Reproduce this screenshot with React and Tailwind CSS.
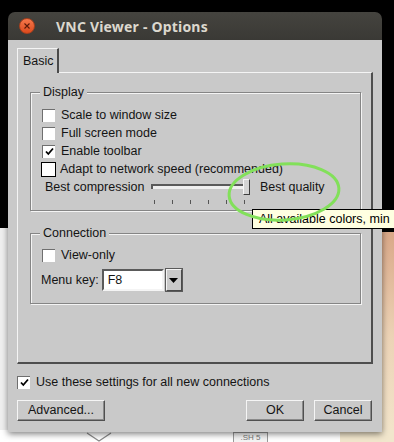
import React from "react";

const font = { fontFamily: '"Liberation Sans", Arial, sans-serif' };

function Check({ checked, focus }) {
  return (
    <div
      className={
        focus
          ? "w-[15px] h-[15px] border border-black bg-white flex items-center justify-center"
          : "w-[13px] h-[13px] bg-white border-t border-l border-[#6f6f6f] border-r-[#ececec] border-b-[#ececec] flex items-center justify-center"
      }
    >
      {checked && (
        <svg width="9" height="9" viewBox="0 0 9 9">
          <path d="M1 4.5 L3.3 7 L8 1.5" stroke="#000" strokeWidth="1.8" fill="none" />
        </svg>
      )}
    </div>
  );
}

function CheckRow({ label, checked, focus }) {
  return (
    <div className="flex items-center h-[18px]">
      <div className={focus ? "w-[19px] -ml-[1px]" : "w-[19px]"}>
        <Check checked={checked} focus={focus} />
      </div>
      <span className="text-[12.5px] leading-none">{label}</span>
    </div>
  );
}

function Group({ title, className, children }) {
  return (
    <div
      className={
        "relative border border-[#858585] shadow-[inset_1px_1px_0_#f4f4f4,1px_1px_0_#f4f4f4] " + className
      }
    >
      <span className="absolute -top-[8px] left-[9px] px-[3px] bg-[#c9c9c9] text-[12.5px] leading-[15px]">
        {title}
      </span>
      {children}
    </div>
  );
}

function Button({ children, className }) {
  return (
    <button
      className={
        "h-[21px] text-[12.5px] leading-none border border-[#f5f5f5] border-r-[#505050] border-b-[#505050] shadow-[inset_-1px_-1px_0_#8a8a8a] bg-[#c9c9c9] " +
        className
      }
    >
      {children}
    </button>
  );
}

export default function App() {
  return (
    <div className="relative w-[394px] h-[442px] overflow-hidden bg-black" style={font}>
      {/* desktop behind the window */}
      <div className="absolute left-0 top-[228px] w-[10px] bottom-0 bg-[#efefef]" />
      <div className="absolute left-[380px] top-[232px] right-0 bottom-0 bg-gradient-to-b from-[#d9a888] via-[#ecd3b6] to-[#f3e6cc]" />
      <div className="absolute left-0 top-[430px] w-[340px] bottom-0 bg-white" />
      <div className="absolute left-[340px] top-[430px] right-0 bottom-0 bg-[#f1e6cc]" />
      <svg className="absolute left-[86px] top-[432px]" width="26" height="10" viewBox="0 0 26 10">
        <path d="M1 1 L13 9 L25 1" stroke="#8a8a8a" strokeWidth="1.2" fill="none" />
      </svg>
      <div className="absolute left-[233px] top-[432px] w-[35px] h-[12px] border border-[#9a9a9a] bg-[#f4f4f4] text-[8px] leading-[10px] text-[#777] text-center">
        .SH 5
      </div>

      {/* window */}
      <div className="absolute left-[8px] top-[12px] w-[374px] h-[420px] rounded-t-[7px] overflow-hidden flex flex-col shadow-[0_2px_6px_rgba(0,0,0,0.5)]">
        <div className="h-[28px] bg-gradient-to-b from-[#45443f] to-[#3a3935] flex items-center">
          <div className="ml-[11px] w-[16px] h-[16px] rounded-full bg-gradient-to-b from-[#f5774a] to-[#dc4a1c] border border-[#a8401e] flex items-center justify-center">
            <svg width="6" height="6" viewBox="0 0 6 6">
              <path d="M0.5 0.5 L5.5 5.5 M5.5 0.5 L0.5 5.5" stroke="#5a1a08" strokeWidth="1.1" />
            </svg>
          </div>
          <span
            className="ml-[21px] text-[14px] font-bold text-[#dcd8ce] tracking-[0.2px]"
            style={{ fontFamily: '"Noto Sans", "Open Sans", sans-serif' }}
          >
            VNC Viewer - Options
          </span>
        </div>

        <div className="flex-1 bg-[#c9c9c9] text-[#141414] pt-[8px] px-[9px] flex flex-col">
          {/* tab */}
          <div className="w-[42px] h-[25px] -mb-[1px] relative z-10 bg-[#c9c9c9] border-t border-l border-[#f4f4f4] border-r-2 border-r-[#4a4a4a] flex items-center pl-[5px] text-[12.5px]">
            Basic
          </div>
          {/* tab panel */}
          <div className="h-[292px] w-[356px] border border-[#f4f4f4] border-r-2 border-b-2 border-r-[#4e4e4e] border-b-[#4e4e4e] pt-[19px] px-[12px]">
            <Group title="Display" className="h-[119px] w-[331px] pt-[13px] pl-[11px]">
              <CheckRow label="Scale to window size" />
              <CheckRow label="Full screen mode" />
              <CheckRow label="Enable toolbar" checked />
              <CheckRow label="Adapt to network speed (recommended)" focus />
              <div className="flex items-start mt-[1px]">
                <span className="text-[12.5px] leading-[16px] ml-[3px] w-[106px]">Best compression</span>
                <div className="flex flex-col">
                  <div className="relative w-[99px] h-[16px]">
                    <div className="absolute left-0 top-[5px] w-[98px] h-[5px] border-t-2 border-l-2 border-[#5a5a5a] bg-[#efefef]" />
                    <div className="absolute left-[92px] top-0 w-[7px] h-[16px] bg-[#d4d4d4] border border-[#f6f6f6] border-r-[#3e3e3e] border-b-[#3e3e3e]" />
                  </div>
                  <div className="flex gap-[17px] pl-[3px] mt-[5px]">
                    <div className="w-px h-[4px] bg-[#555]" />
                    <div className="w-px h-[4px] bg-[#555]" />
                    <div className="w-px h-[4px] bg-[#555]" />
                    <div className="w-px h-[4px] bg-[#555]" />
                    <div className="w-px h-[4px] bg-[#555]" />
                    <div className="w-px h-[4px] bg-[#555]" />
                  </div>
                </div>
                <span className="text-[12.5px] leading-[16px] ml-[10px]">Best quality</span>
              </div>
            </Group>

            <Group title="Connection" className="mt-[22px] h-[71px] w-[331px] pt-[12px] pl-[11px]">
              <CheckRow label="View-only" />
              <div className="flex items-center mt-[5px] -ml-[1px]">
                <span className="text-[12.5px] mr-[3px]">Menu key:</span>
                <div className="w-[62px] h-[22px] bg-white border-2 border-[#5a5a5a] border-r-[#f4f4f4] border-b-[#f4f4f4] flex items-center pl-[4px] text-[12.5px]">
                  F8
                </div>
                <div className="ml-[2px] w-[16px] h-[22px] bg-[#c9c9c9] border border-[#f4f4f4] border-r-[#4a4a4a] border-b-[#4a4a4a] shadow-[0_0_0_1px_#5a5a5a] flex items-center justify-center">
                  <svg width="9" height="5" viewBox="0 0 9 5">
                    <path d="M0 0 L9 0 L4.5 5 Z" fill="#000" />
                  </svg>
                </div>
              </div>
            </Group>
          </div>

          <div className="flex items-center mt-[10px] h-[16px]">
            <div className="w-[19px]">
              <Check checked />
            </div>
            <span className="text-[12.5px] leading-none">Use these settings for all new connections</span>
          </div>

          <div className="flex mt-[10px]">
            <Button className="w-[88px]">Advanced...</Button>
            <div className="flex-1" />
            <Button className="w-[58px]">OK</Button>
            <Button className="w-[58px] ml-[10px] mr-[1px]">Cancel</Button>
          </div>
        </div>
      </div>

      {/* tooltip */}
      <div className="absolute left-[252px] top-[209px] h-[20px] w-[160px] bg-[#ffffe1] border border-black text-[12.5px] leading-[18px] pl-[6px] whitespace-nowrap text-black">
        All available colors, min
      </div>

      {/* annotation ellipse */}
      <svg className="absolute left-[224px] top-[160px]" width="120" height="64" viewBox="0 0 120 64">
        <ellipse cx="60" cy="32" rx="55" ry="28" stroke="#82e05a" strokeWidth="3" fill="none" transform="rotate(-4 60 32)" />
      </svg>
    </div>
  );
}
